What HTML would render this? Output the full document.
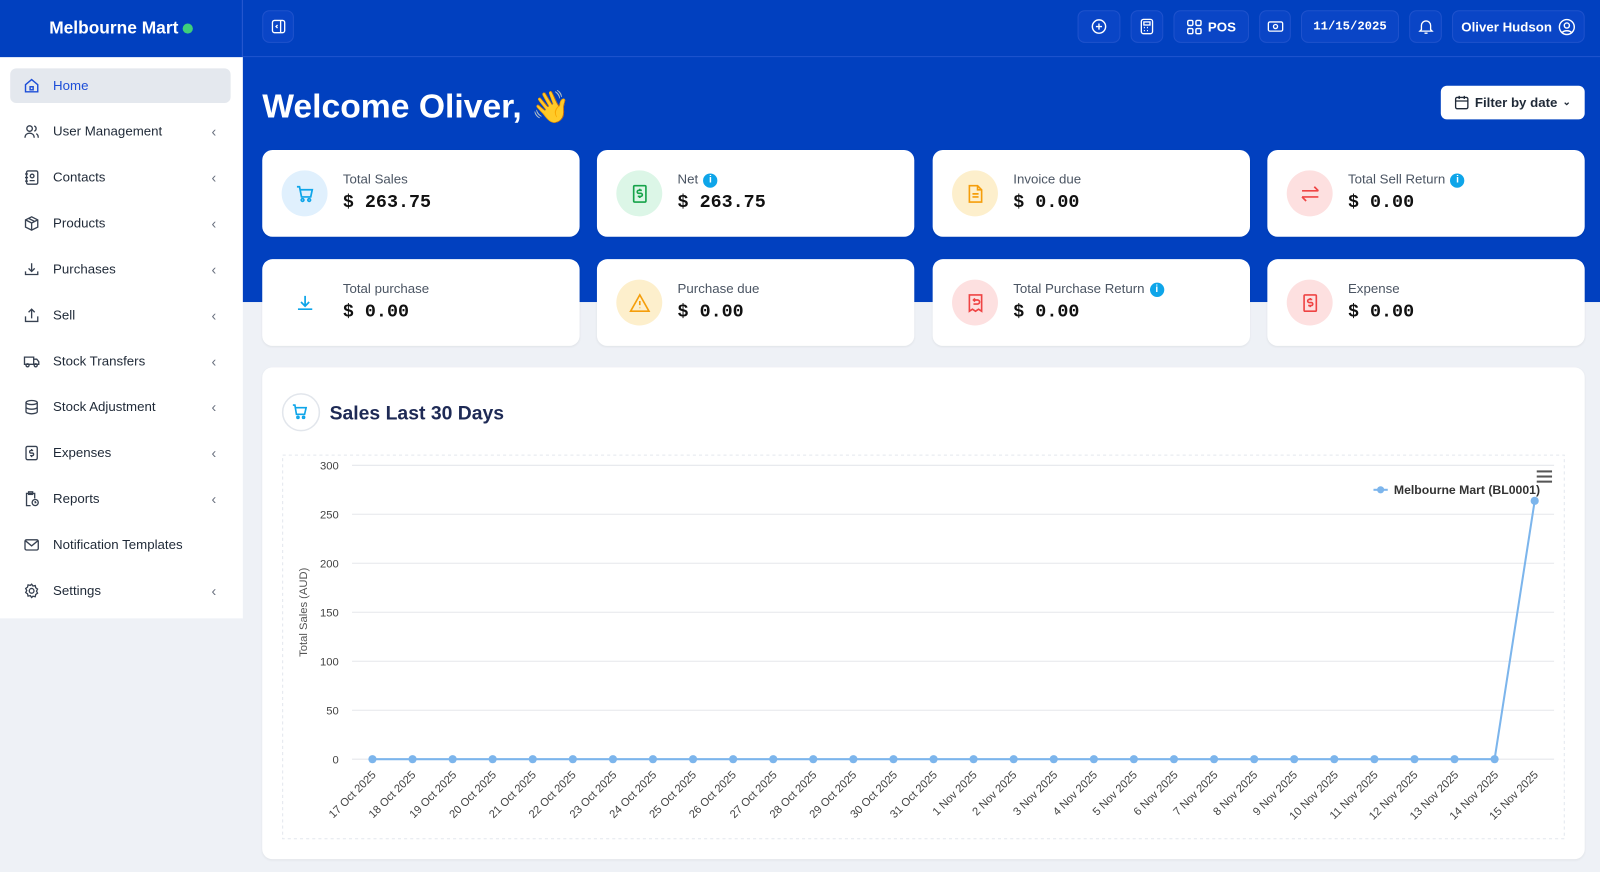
<!DOCTYPE html>
<html><head><meta charset="utf-8"><style>
*{box-sizing:border-box;margin:0;padding:0}
html,body{width:1600px;height:872px;overflow:hidden;background:#eef1f6}
#w{position:absolute;left:0;top:0;width:1568px;height:855px;transform:scale(1.020408);transform-origin:0 0;font-family:"Liberation Sans",sans-serif}
.top{position:absolute;left:0;top:0;width:1568px;height:296px;background:#0140bf}
.brand{position:absolute;left:0;top:0;width:238px;height:56px;background:#0140bf;color:#fff;font-weight:bold;font-size:17px;text-align:center;line-height:56px;border-right:1px solid #2a5ad0}
.brand i{display:inline-block;width:10px;height:10px;border-radius:50%;background:#3ecf7a;margin-left:4px}
.hline{position:absolute;left:238px;top:55px;width:1330px;height:1px;background:#1f55cf}
.side{position:absolute;left:0;top:56px;width:238px;height:550px;background:#fff}
.item{position:absolute;left:10px;width:216px;height:34px;font-size:13px;color:#1f2937;line-height:34px;padding-left:42px}
.item svg{position:absolute;left:13px;top:9px}
.item .ch{position:absolute;right:14px;top:0;color:#6b7280;font-size:14px}
.item.act{background:#e4e8ee;border-radius:6px;color:#1d4ed8}
.btn{position:absolute;top:10px;height:32px;border:1px solid #1f52cc;background:#0a45c6;border-radius:7px;color:#fff;font-size:13px;font-weight:bold;display:flex;align-items:center;justify-content:center;gap:6px}
h1{position:absolute;left:257px;top:85px;color:#fff;font-size:33px;font-weight:bold}
.filter{position:absolute;left:1412px;top:84px;width:141px;height:33px;background:#fff;border-radius:6px;font-size:13px;font-weight:bold;color:#1f2937;display:flex;align-items:center;justify-content:center;gap:5px}
.card{position:absolute;width:311px;height:85px;background:#fff;border-radius:10px;box-shadow:0 1px 2px rgba(0,0,0,.06)}
.card .ic{position:absolute;left:19px;top:20px;width:45px;height:45px;border-radius:50%;display:flex;align-items:center;justify-content:center}
.card .t{position:absolute;left:79px;top:21px;font-size:13px;color:#4b5563}
.card .v{position:absolute;left:79px;top:42px;font-size:18px;font-weight:bold;font-family:"Liberation Mono",monospace;color:#111}
.info{display:inline-block;width:14px;height:14px;border-radius:50%;background:#0ea5e9;color:#fff;font-size:10px;text-align:center;line-height:14px;font-weight:bold;margin-left:5px;vertical-align:1px}
.chart{position:absolute;left:257px;top:360px;width:1296px;height:482px;background:#fff;border-radius:10px;box-shadow:0 1px 2px rgba(0,0,0,.05)}
</style></head><body><div id="w">
<div class="top"></div>
<div class="brand">Melbourne Mart<i></i></div>
<div class="hline"></div>
<div class="btn" style="left:257px;width:31px"><svg width="14" height="14" viewBox="0 0 14 14" fill="none" stroke="#fff" stroke-width="1.3"><rect x="1" y="1" width="12" height="12" rx="2"/><path d="M9 1v12M6 5.5 4.5 7 6 8.5"/></svg></div>
<div class="btn" style="left:1056px;width:42px"><svg width="16" height="16" viewBox="0 0 16 16" fill="none" stroke="#fff" stroke-width="1.4"><circle cx="8" cy="8" r="6.5"/><path d="M8 5v6M5 8h6"/></svg></div>
<div class="btn" style="left:1108px;width:32px"><svg width="14" height="16" viewBox="0 0 14 16" fill="none" stroke="#fff" stroke-width="1.3"><rect x="1.5" y="1" width="11" height="14" rx="2"/><rect x="4" y="3.5" width="6" height="3"/><path d="M4 9h1M7 9h1M10 9h0M4 12h1M7 12h1M10 12h0"/></svg></div>
<div class="btn" style="left:1150px;width:74px"><svg width="15" height="15" viewBox="0 0 15 15" fill="none" stroke="#fff" stroke-width="1.4"><rect x="1" y="1" width="5" height="5" rx="1.3"/><rect x="9" y="1" width="5" height="5" rx="1.3"/><rect x="1" y="9" width="5" height="5" rx="1.3"/><rect x="9" y="9" width="5" height="5" rx="1.3"/></svg>POS</div>
<div class="btn" style="left:1234px;width:31px"><svg width="16" height="12" viewBox="0 0 16 12" fill="none" stroke="#fff" stroke-width="1.3"><rect x="1" y="1.5" width="14" height="9" rx="1.5"/><circle cx="8" cy="6" r="2"/></svg></div>
<div class="btn" style="left:1275px;width:96px;font-family:'Liberation Mono',monospace;font-size:12px">11/15/2025</div>
<div class="btn" style="left:1381px;width:32px"><svg width="15" height="16" viewBox="0 0 15 16" fill="none" stroke="#fff" stroke-width="1.3"><path d="M3 11V7a4.5 4.5 0 0 1 9 0v4l1.5 1.5h-12z"/><path d="M6 14.5h3"/></svg></div>
<div class="btn" style="left:1423px;width:130px">Oliver Hudson <svg width="17" height="17" viewBox="0 0 17 17" fill="none" stroke="#fff" stroke-width="1.4"><circle cx="8.5" cy="8.5" r="7.3"/><circle cx="8.5" cy="7" r="2.5"/><path d="M4 14c1.5-2.5 7.5-2.5 9 0"/></svg></div>

<div class="side">
<div class="item act" style="top:11px"><svg width="16" height="16" viewBox="0 0 16 16" fill="none" stroke="#1d4ed8" stroke-width="1.4"><path d="M2 7 8 2l6 5v7H2z"/><rect x="6.5" y="9" width="3" height="3"/></svg>Home</div>
<div class="item" style="top:56px"><svg width="16" height="16" viewBox="0 0 16 16" fill="none" stroke="#374151" stroke-width="1.3"><circle cx="6" cy="5" r="2.7"/><path d="M1.5 14c0-3 2-4.5 4.5-4.5s4.5 1.5 4.5 4.5M10.5 2.5a2.6 2.6 0 0 1 0 5M12.5 10c1.3.6 2 2 2 4"/></svg>User Management<span class="ch">‹</span></div>
<div class="item" style="top:101px"><svg width="16" height="16" viewBox="0 0 16 16" fill="none" stroke="#374151" stroke-width="1.3"><rect x="3" y="1.5" width="11" height="13" rx="1.5"/><circle cx="8.5" cy="6.5" r="1.8"/><path d="M6 11h5M1.5 4.5h3M1.5 8h3M1.5 11.5h3"/></svg>Contacts<span class="ch">‹</span></div>
<div class="item" style="top:146px"><svg width="16" height="16" viewBox="0 0 16 16" fill="none" stroke="#374151" stroke-width="1.3"><path d="M8 1.5 14 4.5v7L8 14.5 2 11.5v-7zM2 4.5 8 7.5l6-3M8 7.5v7M5 3l6 3"/></svg>Products<span class="ch">‹</span></div>
<div class="item" style="top:191px"><svg width="16" height="16" viewBox="0 0 16 16" fill="none" stroke="#374151" stroke-width="1.3"><path d="M8 2v8M5 7l3 3 3-3M2 10v3h12v-3"/></svg>Purchases<span class="ch">‹</span></div>
<div class="item" style="top:236px"><svg width="16" height="16" viewBox="0 0 16 16" fill="none" stroke="#374151" stroke-width="1.3"><path d="M8 11V2M5 5l3-3 3 3M2 9v5h12V9"/></svg>Sell<span class="ch">‹</span></div>
<div class="item" style="top:281px"><svg width="16" height="16" viewBox="0 0 16 16" fill="none" stroke="#374151" stroke-width="1.3"><path d="M1 4h9v7H1zM10 6h3l2 2.5V11h-5"/><circle cx="4" cy="12" r="1.5"/><circle cx="12" cy="12" r="1.5"/></svg>Stock Transfers<span class="ch">‹</span></div>
<div class="item" style="top:326px"><svg width="16" height="16" viewBox="0 0 16 16" fill="none" stroke="#374151" stroke-width="1.3"><ellipse cx="8" cy="3.5" rx="5.5" ry="2"/><path d="M2.5 3.5v9c0 1.1 2.5 2 5.5 2s5.5-.9 5.5-2v-9M2.5 8c0 1.1 2.5 2 5.5 2s5.5-.9 5.5-2"/></svg>Stock Adjustment<span class="ch">‹</span></div>
<div class="item" style="top:371px"><svg width="16" height="16" viewBox="0 0 16 16" fill="none" stroke="#374151" stroke-width="1.3"><rect x="2.5" y="1.5" width="11" height="13" rx="1.5"/><path d="M9.5 5.5H7.3a1.2 1.2 0 0 0 0 2.5h1.4a1.2 1.2 0 0 1 0 2.5H6.5M8 4v1.5M8 10.5V12"/></svg>Expenses<span class="ch">‹</span></div>
<div class="item" style="top:416px"><svg width="16" height="16" viewBox="0 0 16 16" fill="none" stroke="#374151" stroke-width="1.3"><path d="M7 14.5H3V2.5h8v5"/><rect x="5" y="1" width="4" height="2.5"/><circle cx="11.5" cy="11.5" r="3"/><path d="M11.5 10v1.5h1.2"/></svg>Reports<span class="ch">‹</span></div>
<div class="item" style="top:461px"><svg width="16" height="16" viewBox="0 0 16 16" fill="none" stroke="#374151" stroke-width="1.3"><rect x="1.5" y="3" width="13" height="10" rx="1.5"/><path d="m2 4 6 5 6-5"/></svg>Notification Templates</div>
<div class="item" style="top:506px"><svg width="16" height="16" viewBox="0 0 16 16" fill="none" stroke="#374151" stroke-width="1.3"><circle cx="8" cy="8" r="2.3"/><path d="M8 1.5l1.3 1.8 2.2-.5.5 2.2 1.8 1.3-1 2 1 2-1.8 1.3-.5 2.2-2.2-.5L8 14.5l-1.3-1.8-2.2.5-.5-2.2-1.8-1.3 1-2-1-2 1.8-1.3.5-2.2 2.2.5z"/></svg>Settings<span class="ch">‹</span></div>
</div>

<h1>Welcome Oliver, <span style="font-family:'DejaVu Sans',sans-serif;font-size:31px">👋</span></h1>
<div class="filter"><svg width="15" height="15" viewBox="0 0 15 15" fill="none" stroke="#1f2937" stroke-width="1.3"><rect x="1.5" y="2.5" width="12" height="11" rx="1.5"/><path d="M1.5 6h12M5 1v3M10 1v3"/></svg>Filter by date <span style="font-size:10px">⌄</span></div>

<div class="card" style="left:257px;top:147px"><div class="ic" style="background:#e0f0fd"><svg width="20" height="20" viewBox="0 0 20 20" fill="none" stroke="#0ea5e9" stroke-width="1.7"><path d="M2 3h2.5l2 10h9l1.5-7H5.5"/><circle cx="7.5" cy="16" r="1.3"/><circle cx="14" cy="16" r="1.3"/></svg></div><div class="t">Total Sales</div><div class="v">$ 263.75</div></div>
<div class="card" style="left:585px;top:147px"><div class="ic" style="background:#dcf6e7"><svg width="20" height="20" viewBox="0 0 20 20" fill="none" stroke="#16a34a" stroke-width="1.6"><rect x="4" y="2" width="12" height="16" rx="1"/><path d="M12 6.5H9a1.5 1.5 0 0 0 0 3h2a1.5 1.5 0 0 1 0 3H8M10 5v1.5M10 12.5V14"/></svg></div><div class="t">Net<span class="info">i</span></div><div class="v">$ 263.75</div></div>
<div class="card" style="left:914px;top:147px"><div class="ic" style="background:#fdefcc"><svg width="20" height="20" viewBox="0 0 20 20" fill="none" stroke="#f59e0b" stroke-width="1.6"><path d="M4 2h8l4 4v12H4z"/><path d="M12 2v4h4M7 10h6M7 13h6"/></svg></div><div class="t">Invoice due</div><div class="v">$ 0.00</div></div>
<div class="card" style="left:1242px;top:147px"><div class="ic" style="background:#fde0e0"><svg width="22" height="20" viewBox="0 0 22 20" fill="none" stroke="#ef4444" stroke-width="1.7"><path d="M3 7h16M15 3l4 4M19 13H3M7 17l-4-4"/></svg></div><div class="t">Total Sell Return<span class="info">i</span></div><div class="v">$ 0.00</div></div>

<div class="card" style="left:257px;top:254px"><div class="ic" style="background:#fff"><svg width="20" height="20" viewBox="0 0 20 20" fill="none" stroke="#0ea5e9" stroke-width="1.7"><path d="M10 3v10M6 9l4 4 4-4M3 16h14"/></svg></div><div class="t">Total purchase</div><div class="v">$ 0.00</div></div>
<div class="card" style="left:585px;top:254px"><div class="ic" style="background:#fdefcc"><svg width="22" height="20" viewBox="0 0 22 20" fill="none" stroke="#f59e0b" stroke-width="1.6"><path d="M11 2 20 18H2z"/><path d="M11 8v4M11 14.5v.5"/></svg></div><div class="t">Purchase due</div><div class="v">$ 0.00</div></div>
<div class="card" style="left:914px;top:254px"><div class="ic" style="background:#fde0e0"><svg width="20" height="20" viewBox="0 0 20 20" fill="none" stroke="#ef4444" stroke-width="1.6"><path d="M4 2h12v16l-3-2-3 2-3-2-3 2z"/><path d="M8 7h4a2 2 0 0 1 0 4H8M9.5 5.5 8 7l1.5 1.5"/></svg></div><div class="t">Total Purchase Return<span class="info">i</span></div><div class="v">$ 0.00</div></div>
<div class="card" style="left:1242px;top:254px"><div class="ic" style="background:#fde0e0"><svg width="20" height="20" viewBox="0 0 20 20" fill="none" stroke="#ef4444" stroke-width="1.6"><rect x="4" y="2" width="12" height="16" rx="1"/><path d="M12 6.5H9a1.5 1.5 0 0 0 0 3h2a1.5 1.5 0 0 1 0 3H8M10 5v1.5M10 12.5V14"/></svg></div><div class="t">Expense</div><div class="v">$ 0.00</div></div>

<div class="chart"></div>
<svg style="position:absolute;left:0;top:0" width="1568" height="855">
<circle cx="295" cy="404" r="18" fill="#fff" stroke="#e2e6ec" stroke-width="1.5"/>
<g fill="none" stroke="#0ea5e9" stroke-width="1.6" transform="translate(287,396)"><path d="M0 1h2l1.5 9h8l1.5-6.5H3"/><circle cx="5" cy="13" r="1"/><circle cx="10.5" cy="13" r="1"/></g>
<text x="323" y="411" font-family="Liberation Sans" font-weight="bold" font-size="19" fill="#1e2a55">Sales Last 30 Days</text>
<rect x="277" y="446" width="1256" height="376" fill="none" stroke="#e3e7ee" stroke-dasharray="3,3"/>
<g stroke="#e5e7eb" stroke-width="1"><line x1="345" y1="456" x2="1523" y2="456"/><line x1="345" y1="504" x2="1523" y2="504"/><line x1="345" y1="552" x2="1523" y2="552"/><line x1="345" y1="600" x2="1523" y2="600"/><line x1="345" y1="648" x2="1523" y2="648"/><line x1="345" y1="696" x2="1523" y2="696"/><line x1="345" y1="744" x2="1523" y2="744"/></g>
<g font-family="Liberation Sans" font-size="11" fill="#444" text-anchor="end"><text x="332" y="460">300</text><text x="332" y="508">250</text><text x="332" y="556">200</text><text x="332" y="604">150</text><text x="332" y="652">100</text><text x="332" y="700">50</text><text x="332" y="748">0</text></g>
<text transform="translate(301,600) rotate(-90)" text-anchor="middle" font-family="Liberation Sans" font-size="11" fill="#555">Total Sales (AUD)</text>
<polyline fill="none" stroke="#7cb5ec" stroke-width="2" points="365,744 1464.7,744 1504,490.8"/>
<g fill="#7cb5ec"><circle cx="365" cy="744" r="4"/><circle cx="404.3" cy="744" r="4"/><circle cx="443.6" cy="744" r="4"/><circle cx="482.8" cy="744" r="4"/><circle cx="522.1" cy="744" r="4"/><circle cx="561.4" cy="744" r="4"/><circle cx="600.7" cy="744" r="4"/><circle cx="639.9" cy="744" r="4"/><circle cx="679.2" cy="744" r="4"/><circle cx="718.5" cy="744" r="4"/><circle cx="757.8" cy="744" r="4"/><circle cx="797" cy="744" r="4"/><circle cx="836.3" cy="744" r="4"/><circle cx="875.6" cy="744" r="4"/><circle cx="914.9" cy="744" r="4"/><circle cx="954.1" cy="744" r="4"/><circle cx="993.4" cy="744" r="4"/><circle cx="1032.7" cy="744" r="4"/><circle cx="1072" cy="744" r="4"/><circle cx="1111.2" cy="744" r="4"/><circle cx="1150.5" cy="744" r="4"/><circle cx="1189.8" cy="744" r="4"/><circle cx="1229.1" cy="744" r="4"/><circle cx="1268.3" cy="744" r="4"/><circle cx="1307.6" cy="744" r="4"/><circle cx="1346.9" cy="744" r="4"/><circle cx="1386.2" cy="744" r="4"/><circle cx="1425.4" cy="744" r="4"/><circle cx="1464.7" cy="744" r="4"/><circle cx="1504" cy="490.8" r="4"/></g>
<g font-family="Liberation Sans" font-size="11" fill="#444" text-anchor="end">
<text transform="translate(369,760) rotate(-45)">17 Oct 2025</text>
<text transform="translate(408,760) rotate(-45)">18 Oct 2025</text>
<text transform="translate(448,760) rotate(-45)">19 Oct 2025</text>
<text transform="translate(487,760) rotate(-45)">20 Oct 2025</text>
<text transform="translate(526,760) rotate(-45)">21 Oct 2025</text>
<text transform="translate(565,760) rotate(-45)">22 Oct 2025</text>
<text transform="translate(605,760) rotate(-45)">23 Oct 2025</text>
<text transform="translate(644,760) rotate(-45)">24 Oct 2025</text>
<text transform="translate(683,760) rotate(-45)">25 Oct 2025</text>
<text transform="translate(722,760) rotate(-45)">26 Oct 2025</text>
<text transform="translate(762,760) rotate(-45)">27 Oct 2025</text>
<text transform="translate(801,760) rotate(-45)">28 Oct 2025</text>
<text transform="translate(840,760) rotate(-45)">29 Oct 2025</text>
<text transform="translate(880,760) rotate(-45)">30 Oct 2025</text>
<text transform="translate(919,760) rotate(-45)">31 Oct 2025</text>
<text transform="translate(958,760) rotate(-45)">1 Nov 2025</text>
<text transform="translate(997,760) rotate(-45)">2 Nov 2025</text>
<text transform="translate(1037,760) rotate(-45)">3 Nov 2025</text>
<text transform="translate(1076,760) rotate(-45)">4 Nov 2025</text>
<text transform="translate(1115,760) rotate(-45)">5 Nov 2025</text>
<text transform="translate(1155,760) rotate(-45)">6 Nov 2025</text>
<text transform="translate(1194,760) rotate(-45)">7 Nov 2025</text>
<text transform="translate(1233,760) rotate(-45)">8 Nov 2025</text>
<text transform="translate(1272,760) rotate(-45)">9 Nov 2025</text>
<text transform="translate(1312,760) rotate(-45)">10 Nov 2025</text>
<text transform="translate(1351,760) rotate(-45)">11 Nov 2025</text>
<text transform="translate(1390,760) rotate(-45)">12 Nov 2025</text>
<text transform="translate(1430,760) rotate(-45)">13 Nov 2025</text>
<text transform="translate(1469,760) rotate(-45)">14 Nov 2025</text>
<text transform="translate(1508,760) rotate(-45)">15 Nov 2025</text>
</g>
<line x1="1346" y1="480" x2="1360" y2="480" stroke="#7cb5ec" stroke-width="2"/><circle cx="1353" cy="480" r="3.5" fill="#7cb5ec"/>
<text x="1366" y="484" font-family="Liberation Sans" font-size="12" font-weight="bold" fill="#333">Melbourne Mart (BL0001)</text>
<g stroke="#555" stroke-width="2"><line x1="1506" y1="462" x2="1521" y2="462"/><line x1="1506" y1="467" x2="1521" y2="467"/><line x1="1506" y1="472" x2="1521" y2="472"/></g>
</svg>
</div></body></html>
